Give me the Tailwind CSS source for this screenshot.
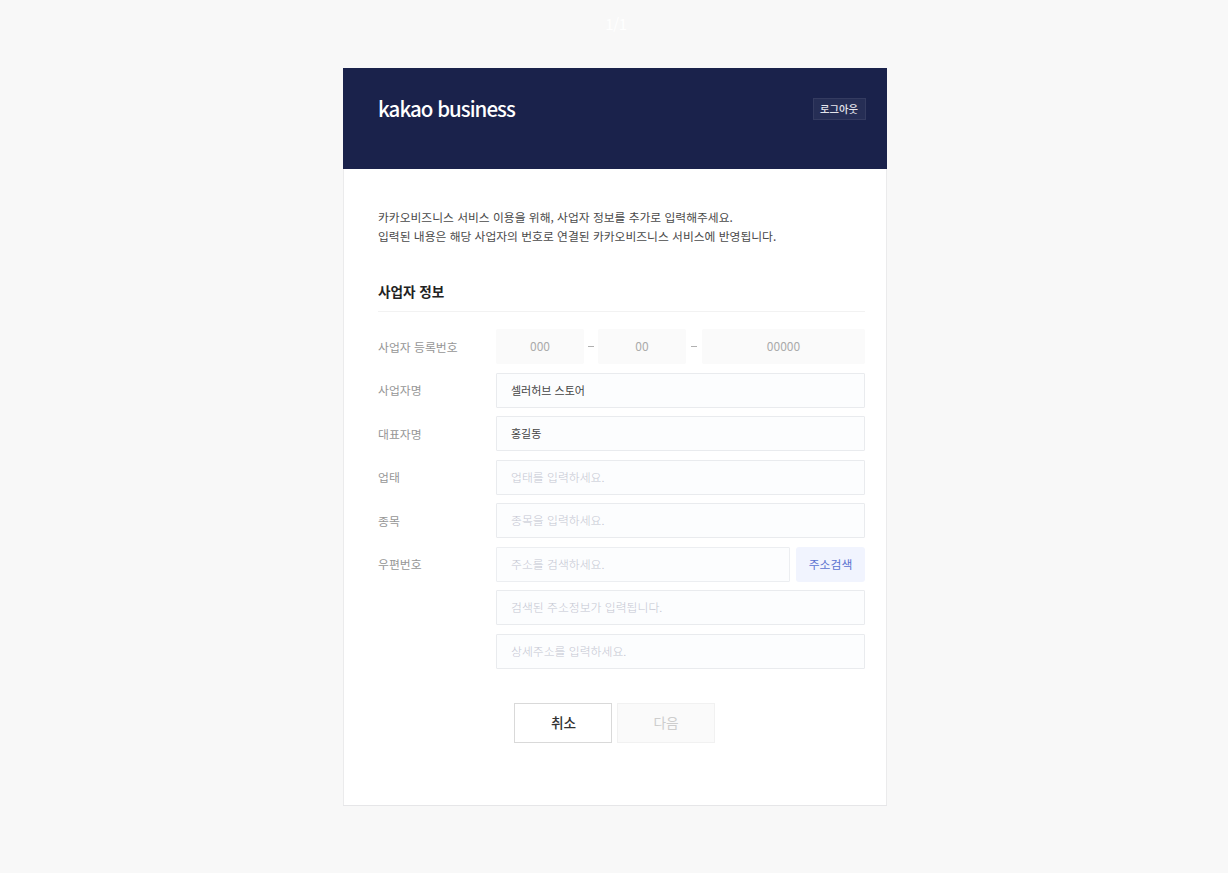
<!DOCTYPE html>
<html lang="ko">
<head>
<meta charset="utf-8">
<title>kakao business</title>
<script src="https://cdn.jsdelivr.net/npm/@tailwindcss/browser@4"></script>
</head>
<body class="h-[873px] overflow-hidden bg-[#f8f8f8] font-['Noto_Sans_CJK_KR',sans-serif] text-xs text-[#4a4a4a]">
<div class="flex h-[68px] justify-center pl-1 pt-3 text-[15px] leading-6 tracking-[-0.4px] text-white">1/1</div>
<main class="ml-[343px] flex h-[738px] w-[544px] flex-col border-b border-b-[#e6e6e8] bg-white">
  <header class="flex h-[101px] shrink-0 items-start justify-between bg-[#1a224b] pl-[35px] pr-[21.5px] pt-[30px]">
    <h1 class="-mt-[5px] text-[20.5px] leading-[30px] font-medium tracking-[-0.98px] text-white">kakao business</h1>
    <button class="h-[22px] w-[53px] border border-[#343b60] bg-[#262e55] text-[10.3px] leading-[20px] font-medium text-[#e4e5ec]">로그아웃</button>
  </header>
  <div class="flex-1 border-x border-[#ebebec] pl-[34px] pr-[21px] pt-[38px]">
    <p class="text-[11.79px] leading-[19px]">카카오비즈니스 서비스 이용을 위해, 사업자 정보를 추가로 입력해주세요.<br>입력된 내용은 해당 사업자의 번호로 연결된 카카오비즈니스 서비스에 반영됩니다.</p>
    <h2 class="mt-[37px] h-[30px] border-b border-[#f2f2f2] text-[13.6px] leading-[19px] font-bold text-[#222]">사업자 정보</h2>
    <form class="mt-[17px] flex flex-col gap-[8.5px] text-[11.85px] text-[#969696]">
      <div class="flex h-[35px] items-center">
        <span class="w-[118px]">사업자 등록번호</span>
        <span class="flex flex-1 items-center text-center text-[#aaa]">
          <span class="h-[35px] w-[88px] rounded-[2px] bg-[#fafafa] text-xs leading-[34px]">000</span>
          <span class="mx-[4px] h-px w-[6px] bg-[#b0b0b0]"></span>
          <span class="h-[35px] w-[88px] rounded-[2px] bg-[#fafafa] text-xs leading-[34px]">00</span>
          <span class="mx-[5px] h-px w-[6px] bg-[#b0b0b0]"></span>
          <span class="h-[35px] flex-1 rounded-[2px] bg-[#fafafa] text-xs leading-[34px]">00000</span>
        </span>
      </div>
      <div class="flex h-[35px] items-center">
        <span class="w-[118px]">사업자명</span>
        <span class="h-[35px] flex-1 rounded-[1px] border border-[#e9ebee] bg-[#fcfdfe] px-[14px] text-[11px] leading-[33px] text-[#444]">셀러허브 스토어</span>
      </div>
      <div class="flex h-[35px] items-center">
        <span class="w-[118px]">대표자명</span>
        <span class="h-[35px] flex-1 rounded-[1px] border border-[#e9ebee] bg-[#fcfdfe] px-[14px] text-[11px] leading-[33px] text-[#444]">홍길동</span>
      </div>
      <div class="flex h-[35px] items-center">
        <span class="w-[118px]">업태</span>
        <span class="h-[35px] flex-1 rounded-[1px] border border-[#e9ebee] bg-[#fcfdfe] px-[14px] leading-[32px] font-light text-[#c4c6d2]">업태를 입력하세요.</span>
      </div>
      <div class="flex h-[35px] items-center">
        <span class="w-[118px]">종목</span>
        <span class="h-[35px] flex-1 rounded-[1px] border border-[#e9ebee] bg-[#fcfdfe] px-[14px] leading-[32px] font-light text-[#c4c6d2]">종목을 입력하세요.</span>
      </div>
      <div class="flex h-[35px] items-center">
        <span class="w-[118px]">우편번호</span>
        <span class="h-[35px] flex-1 rounded-[1px] border border-[#eceef1] bg-[#fcfdfe] px-[14px] leading-[32px] font-light text-[#c4c6d2]">주소를 검색하세요.</span>
        <button type="button" class="ml-[6px] h-[35px] w-[69px] rounded-[3px] bg-[#f1f4fe] pb-px leading-[34px] text-[#5a72d0]">주소검색</button>
      </div>
      <div class="flex h-[35px] pl-[118px]">
        <span class="flex-1 rounded-[1px] border border-[#e9ebee] bg-[#fcfdfe] px-[14px] leading-[32px] font-light text-[#c4c6d2]">검색된 주소정보가 입력됩니다.</span>
      </div>
      <div class="flex h-[35px] pl-[118px]">
        <span class="flex-1 rounded-[1px] border border-[#e9ebee] bg-[#fcfdfe] px-[14px] leading-[32px] font-light text-[#c4c6d2]">상세주소를 입력하세요.</span>
      </div>
    </form>
    <div class="mt-[34px] ml-[136px] flex gap-[5px] text-[13.7px] leading-[36px]">
      <button class="h-10 w-[98px] border border-[#d9d9d9] bg-white pb-px pl-px font-medium text-[#333]">취소</button>
      <button class="h-10 w-[98px] border border-[#f1f1f1] bg-[#fafafa] pb-px text-[#cdcdcd]">다음</button>
    </div>
  </div>
</main>
</body>
</html>
